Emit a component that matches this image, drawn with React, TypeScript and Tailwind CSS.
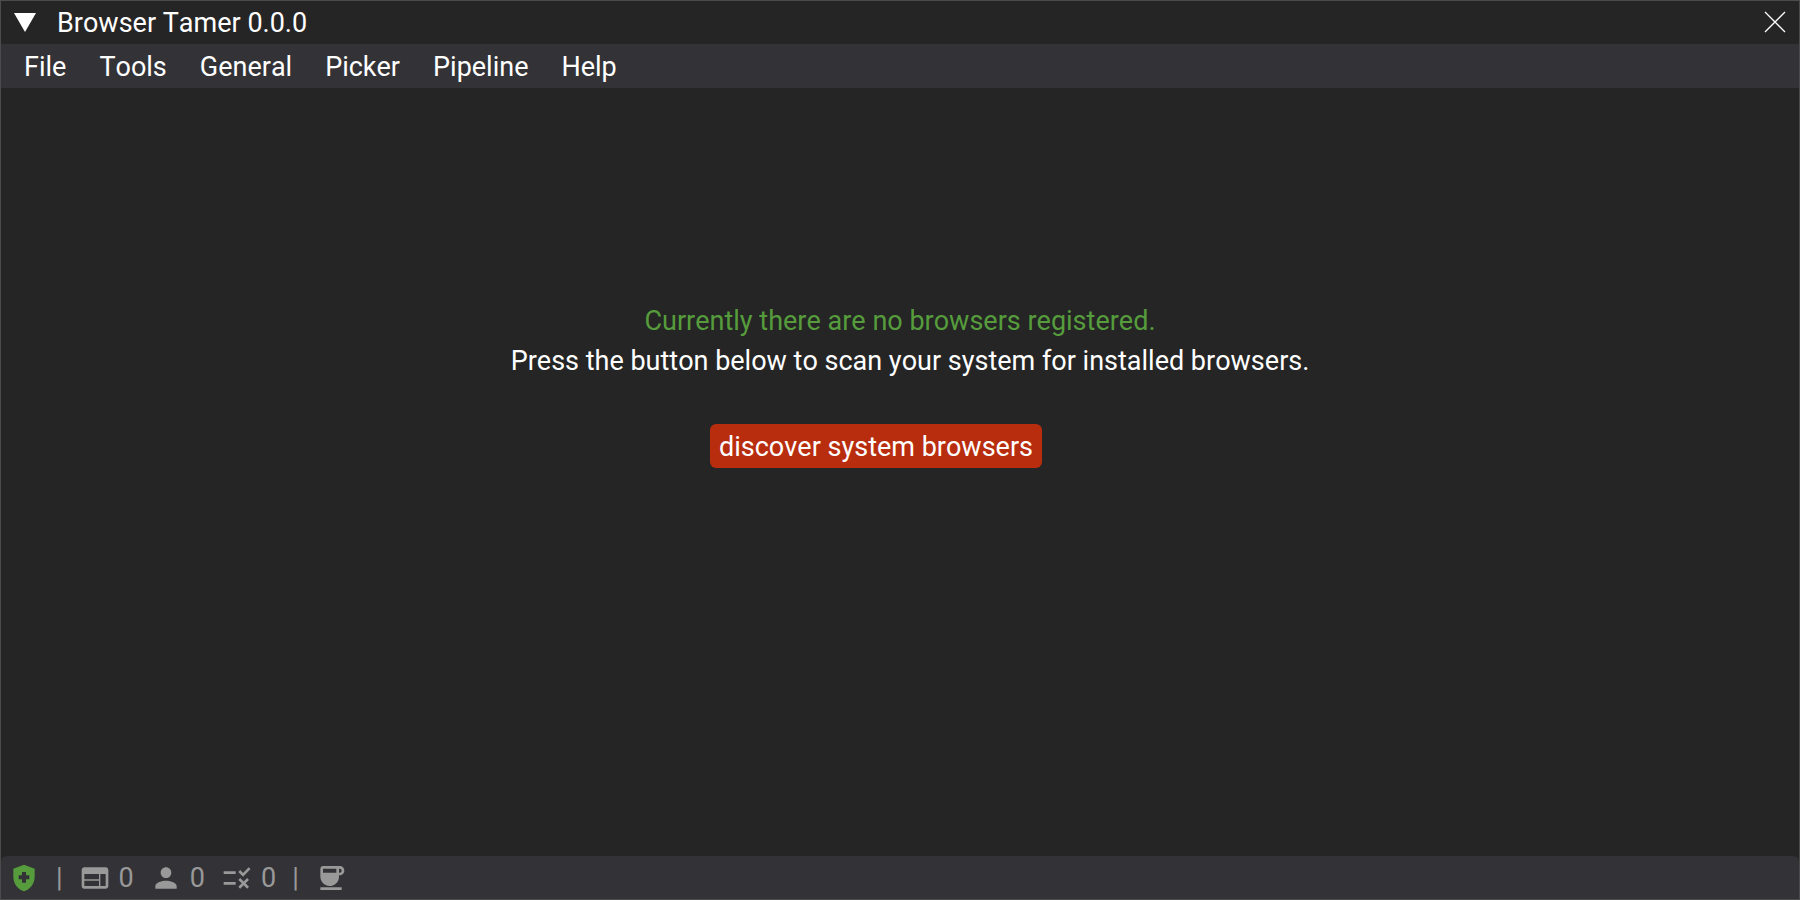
import type { ReactNode } from "react";
import { MdCoffee, MdHealthAndSafety, MdPerson, MdRule, MdWeb } from "react-icons/md";

const menus = ["File", "Tools", "General", "Picker", "Pipeline", "Help"];

function Counter({ icon, label, value }: { icon: ReactNode; label: string; value: number }) {
  return (
    <button type="button" aria-label={label} className="flex items-center gap-2">
      {icon}
      <span>{value}</span>
    </button>
  );
}

export default function App() {
  return (
    <div className="flex min-h-screen flex-col border border-[#4b4b4b] bg-[#252525] font-['Roboto',sans-serif] text-[27px] leading-10 text-white [font-kerning:none]">
      <header className="flex h-[43px] items-center justify-between px-3">
        <div className="flex items-center gap-5">
          <button type="button" aria-label="Collapse window">
            <svg width="24" height="24" viewBox="0 0 24 24" fill="currentColor">
              <path d="M1 2H23L12 21Z" />
            </svg>
          </button>
          <h1>Browser Tamer 0.0.0</h1>
        </div>
        <button type="button" aria-label="Close window">
          <svg width="24" height="24" viewBox="0 0 24 24" stroke="currentColor" strokeWidth="1.3">
            <path d="M2 1L22 21M22 1L2 21" />
          </svg>
        </button>
      </header>

      <nav className="flex h-11 items-center gap-px bg-[#333337] px-[7px] pt-0.5">
        {menus.map((menu) => (
          <button key={menu} type="button" className="px-4">
            {menu}
          </button>
        ))}
      </nav>

      <main className="flex flex-1 flex-col items-center pt-[213px]">
        <p className="text-[#569c3c]">Currently there are no browsers registered.</p>
        <p className="pl-5">Press the button below to scan your system for installed browsers.</p>
        <div className="pt-[43px] pr-12">
          <button type="button" className="flex h-11 items-center rounded-md bg-[#b92d0f] px-[9px] pt-0.5">
            discover system browsers
          </button>
        </div>
      </main>

      <footer className="flex h-[43px] items-center rounded-t-md bg-[#333337] pt-px pl-[7px] text-[#999999]">
        <button type="button" aria-label="Health status" className="text-[#569c3c]">
          <MdHealthAndSafety size={32} />
        </button>
        <span className="px-4">|</span>
        <div className="flex items-center gap-4">
          <Counter icon={<MdWeb size={32} />} label="Browsers" value={0} />
          <Counter icon={<MdPerson size={32} />} label="Profiles" value={0} />
          <Counter icon={<MdRule size={32} />} label="Rules" value={0} />
        </div>
        <span className="px-4">|</span>
        <a href="#coffee" aria-label="Buy a coffee">
          <MdCoffee size={32} />
        </a>
      </footer>
    </div>
  );
}
